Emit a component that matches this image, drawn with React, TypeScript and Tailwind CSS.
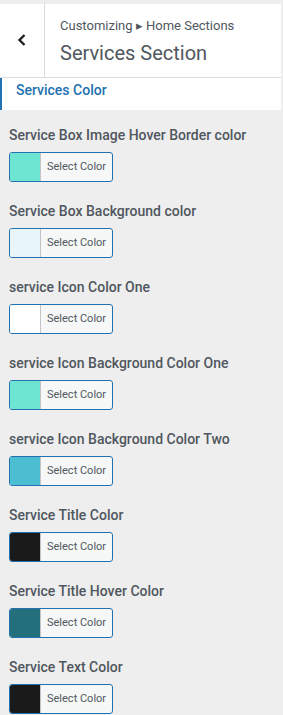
import React from 'react';

const controls = [
  { label: 'Service Box Image Hover Border color', color: '#6ee5d1' },
  { label: 'Service Box Background color', color: '#e8f6fb' },
  { label: 'service Icon Color One', color: '#ffffff' },
  { label: 'service Icon Background Color One', color: '#6ee5d1' },
  { label: 'service Icon Background Color Two', color: '#4bbfd1' },
  { label: 'Service Title Color', color: '#1a1a1a' },
  { label: 'Service Title Hover Color', color: '#236f7b' },
  { label: 'Service Text Color', color: '#1a1a1a' },
];

function ColorControl({ label, color }: { label: string; color: string }) {
  return (
    <div className="flex flex-col pl-[9px] mb-[19px]">
      <span className="text-[14px] leading-[20px] font-medium text-[#50575e]">{label}</span>
      <button className="mt-[7px] flex h-[30px] w-[104px] overflow-hidden rounded-[3px] border border-[#2271b1] bg-[#f6f7f7] text-left">
        <span className="h-full w-[31px] border-r border-[#c3c4c7]" style={{ backgroundColor: color }} />
        <span className="flex h-full items-center pl-[6px] text-[11px] text-[#50575e]">Select Color</span>
      </button>
    </div>
  );
}

export default function App() {
  return (
    <div className="h-[715px] w-[283px] overflow-hidden bg-[#eeeeee] font-['Roboto',sans-serif]">
      {/* header */}
      <div className="mr-[2px] flex h-[78px] border-b border-[#dcdcde]">
        <div className="flex w-[45px] items-center justify-center border-r border-t-[4px] border-[#dcdcde] border-t-[#eeeeee] bg-white">
          <svg width="10" height="14" viewBox="0 0 10 14" className="-mt-[2px]">
            <path d="M7.5 2 L2.5 7 L7.5 12" fill="none" stroke="#1d2327" strokeWidth="2.4" />
          </svg>
        </div>
        <div className="flex flex-1 flex-col border-t-[4px] border-[#eeeeee] bg-white pl-[15px] pt-[12px]">
          <span className="text-[13px] leading-[20px] text-[#50575e]">Customizing ▸ Home Sections</span>
          <span className="mt-[4px] text-[20px] leading-[26px] text-[#50575e]">Services Section</span>
        </div>
      </div>

      {/* section title */}
      <div className="mr-[2px] h-[32px] border-l-2 border-[#2271b1] bg-white pl-[14px]">
        <span className="text-[14px] leading-[20px] font-medium text-[#2271b1]">Services Color</span>
      </div>

      <div className="flex flex-col pt-[15px]">
        {controls.map((c) => (
          <ColorControl key={c.label} label={c.label} color={c.color} />
        ))}
      </div>
    </div>
  );
}
